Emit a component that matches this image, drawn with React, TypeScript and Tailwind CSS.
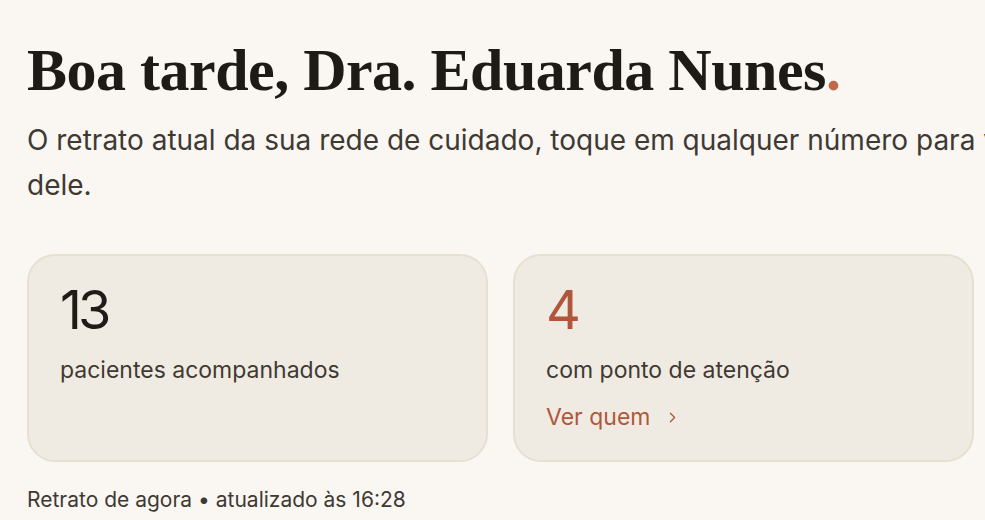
import { ChevronRight } from "lucide-react";

const sans = "font-['Inter','Liberation_Sans',sans-serif]";

function StatCard({ value, label, accent, link }: { value: string; label: string; accent?: boolean; link?: string }) {
  return (
    <div className="flex min-h-[208px] flex-col rounded-[28px] border-2 border-[#e7e0d1] bg-[#f0ebe2] px-[31px] pt-[27px]">
      <div className={`${sans} text-[54px] leading-[54px] font-normal tracking-[-4px] ${accent ? "text-[#b0573b]" : "text-[#1f1b16]"}`}>
        {value}
      </div>
      <div className={`${sans} mt-[18px] text-[23px] leading-[30px] text-[#3f3933]`}>{label}</div>
      {link && (
        <a className={`${sans} mt-[17px] flex items-center gap-[14px] text-[23px] leading-[30px] text-[#b0573b]`}>
          {link}
          <ChevronRight className="h-[17px] w-[17px]" strokeWidth={1.8} />
        </a>
      )}
    </div>
  );
}

export default function App() {
  return (
    <div className="h-[520px] w-[985px] overflow-hidden bg-[#faf7f2] pl-[27px]">
      <h1 className="pt-[34px] font-['Liberation_Serif',serif] text-[60px] leading-[72px] font-bold tracking-[-0.5px] text-[#1e1a15]">
        Boa tarde, Dra. Eduarda Nunes<span className="text-[#c0694a]">.</span>
      </h1>
      <p className={`${sans} mt-[12px] whitespace-nowrap text-[28px] leading-[45px] text-[#3f3933]`}>
        O retrato atual da sua rede de cuidado, toque em qualquer número para ver o que há por trás
        <br />
        dele.
      </p>
      <div className="mt-[46px] grid w-[947px] grid-cols-2 gap-[25px]">
        <StatCard value="13" label="pacientes acompanhados" />
        <StatCard value="4" label="com ponto de atenção" accent link="Ver quem" />
      </div>
      <p className={`${sans} mt-[24px] text-[21px] leading-[28px] text-[#3f3933]`}>
        Retrato de agora • atualizado às 16:28
      </p>
    </div>
  );
}
